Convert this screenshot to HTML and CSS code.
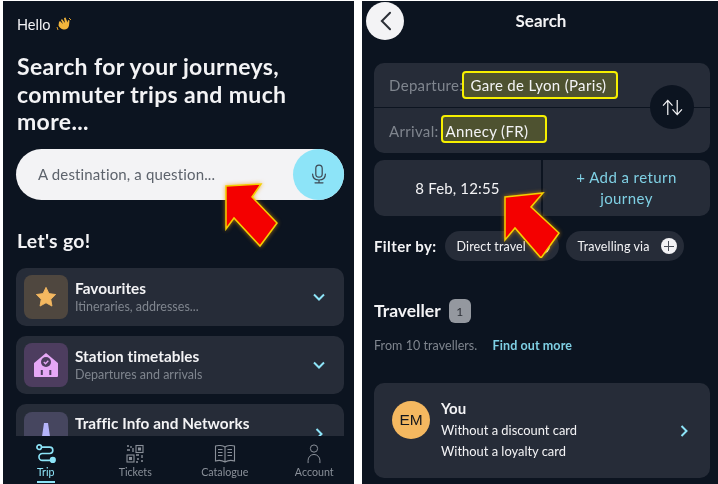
FILE: index.html
```html
<!DOCTYPE html>
<html lang="en">
<head>
<meta charset="utf-8">
<title>Journey search</title>
<link rel="stylesheet" href="styles.css">
</head>
<body>
<div class="shot">
  <section class="phone home">
    <div class="home-body">
      <p class="hello">Hello
        <svg class="wave" viewBox="0 0 16 16"><path d="M3 5l1-1 3 3-2-4 1-1 3 4-1-5 1.500-.5 2 5 .5-2.500 1.500.5-.5 5c-.5 3-3 4.500-5.500 4s-4-2-5-4z" fill="#f2b63c"/><path d="M1 10l1 3M13 1l2 2" stroke="#d99a2a" fill="none"/></svg>
      </p>
      <h1 class="headline">Search for your journeys, commuter trips and much more...</h1>
      <div class="searchbar">
        <span class="placeholder">A destination, a question...</span>
        <span class="mic">
          <svg viewBox="0 0 20 24" width="16" height="20" fill="none" stroke="#3d4752" stroke-width="1.500" stroke-linecap="round"><rect x="6" y="1" width="8" height="15" rx="4"/><path d="M2 12c0 5 3.500 7.500 8 7.500s8-2.500 8-7.500M10 20v3M5 23h10"/></svg>
        </span>
      </div>
      <h2 class="letsgo">Let's go!</h2>
      <div class="menu">
        <div class="item">
          <span class="tile tile-star"><svg viewBox="0 0 24 24" width="22" height="22"><path d="M12 1.500l3.200 6.800 7.300 1-5.300 5.200 1.300 7.400-6.500-3.600-6.500 3.600 1.300-7.400L1.500 9.300l7.300-1z" fill="#f4b860" stroke="#f4b860" stroke-linejoin="round"/></svg></span>
          <div class="item-text"><h3>Favourites</h3><p>Itineraries, addresses...</p></div>
          <svg class="chev" viewBox="0 0 12 8" width="12" height="8"><path d="M1 1.500l5 5 5-5" fill="none" stroke="#8de4f8" stroke-width="2"/></svg>
        </div>
        <div class="item">
          <span class="tile tile-station"><svg viewBox="0 0 24 24" width="24" height="24"><path d="M1 24a1 1 0 01-1-1V10.500a1 1 0 01.4-.8L12 0l11.600 9.700a1 1 0 01.4.8V23a1 1 0 01-1 1z" fill="#e6a8f6"/><rect x="6.800" y="17" width="2" height="5" fill="#4d3d5f"/><rect x="15.300" y="17" width="2" height="5" fill="#4d3d5f"/><circle cx="12" cy="9" r="5" fill="#4d3d5f"/><path d="M9.800 9l1.700 1.700 2.800-3" fill="none" stroke="#e6a8f6" stroke-width="1.300"/></svg></span>
          <div class="item-text"><h3>Station timetables</h3><p>Departures and arrivals</p></div>
          <svg class="chev" viewBox="0 0 12 8" width="12" height="8"><path d="M1 1.500l5 5 5-5" fill="none" stroke="#8de4f8" stroke-width="2"/></svg>
        </div>
        <div class="item item-last">
          <span class="tile tile-road"><svg viewBox="0 0 12 30" width="12" height="30"><path d="M4 1h4l4 27H7.500L7 18H5l-.5 10H0z" fill="#b5b4fa"/></svg></span>
          <div class="item-text"><h3>Traffic Info and Networks</h3></div>
          <svg class="chev chev-right" viewBox="0 0 8 12" width="8" height="12"><path d="M1.500 1l5 5-5 5" fill="none" stroke="#8de4f8" stroke-width="2"/></svg>
        </div>
      </div>
    </div>
    <nav class="tabs">
      <div class="tab tab-on">
        <svg viewBox="0 0 22 22" width="22" height="22" fill="none" stroke="#8de4f8" stroke-width="1.800"><circle cx="3.500" cy="3.500" r="2.500"/><path d="M6 3.500h9a3.500 3.500 0 010 7H7a3.700 3.700 0 000 7.500h9"/><circle cx="18.500" cy="17.500" r="2.500" fill="#8de4f8"/></svg>
        <span>Trip</span>
      </div>
      <div class="tab">
        <svg viewBox="0 0 20 20" width="20" height="20" fill="none" stroke="#8a9099" stroke-width="1.100"><rect x="11" y="1.500" width="7" height="7"/><rect x="2" y="11" width="7" height="7"/><rect x="13.500" y="4" width="2" height="2" fill="#8a9099"/><rect x="4.500" y="13.500" width="2" height="2" fill="#8a9099"/><path d="M2 2h2M6 2v2M2 6h3M8 4v4M11 11h3M17 11v3M12 15h2M11 18h2M16 17h2" stroke-width="1.300"/></svg>
        <span>Tickets</span>
      </div>
      <div class="tab">
        <svg viewBox="0 0 22 20" width="22" height="20" fill="none" stroke="#8a9099" stroke-width="1.100"><path d="M11 3C9 1.500 4 1 1.500 2v15c3-1 7-.5 9.500 1 2.500-1.500 6.500-2 9.500-1V2C18 1 13 1.500 11 3zM11 3v15"/><path d="M4 5.500h4.500M4 8.500h4.500M4 11.500h4.500M13.500 5.500H18M13.500 8.500H18M13.500 11.500H18"/></svg>
        <span>Catalogue</span>
      </div>
      <div class="tab">
        <svg viewBox="0 0 20 22" width="20" height="22" fill="none" stroke="#8a9099" stroke-width="1.100"><circle cx="10" cy="5" r="4"/><path d="M3.500 21v-3a6.500 6.500 0 0113 0v3"/></svg>
        <span>Account</span>
      </div>
    </nav>
  </section>

  <section class="phone search">
    <header class="topbar">
      <span class="back"><svg viewBox="0 0 14 22" width="13" height="20"><path d="M12 2L3 11l9 9" fill="none" stroke="#2b2f36" stroke-width="2.200" stroke-linecap="round"/></svg></span>
      <h2>Search</h2>
    </header>
    <div class="route">
      <div class="route-row"><span class="lbl">Departure:</span><span class="mark">Gare de Lyon (Paris)</span></div>
      <div class="route-row route-row2"><span class="lbl">Arrival:</span><span class="mark mark2">Annecy (FR)</span></div>
      <span class="swap"><svg viewBox="0 0 22 18" width="21" height="17" fill="none" stroke="#f3f3f5" stroke-width="1.300"><path d="M6 17V2M1 7l5-5.500L11 7M16 1v15M11 11l5 5.500 5-5.500"/></svg></span>
    </div>
    <div class="when">
      <div class="when-cell">8 Feb, 12:55</div>
      <div class="when-cell when-add">+ Add a return journey</div>
    </div>
    <div class="filters">
      <strong>Filter by:</strong>
      <span class="chip chip-direct">Direct travel <i class="plus"></i></span>
      <span class="chip chip-via">Travelling via <i class="plus"></i></span>
    </div>
    <div class="traveller-head"><h2>Traveller</h2><span class="count">1</span></div>
    <p class="from">From 10 travellers. <a>Find out more</a></p>
    <div class="person">
      <span class="avatar">EM</span>
      <div class="person-text">
        <h3>You</h3>
        <p>Without a discount card</p>
        <p>Without a loyalty card</p>
      </div>
      <svg class="chev-right" viewBox="0 0 8 12" width="8" height="12"><path d="M1.500 1l5 5-5 5" fill="none" stroke="#8de4f8" stroke-width="2"/></svg>
    </div>
  </section>

  <svg class="arrow arrow-a" viewBox="0 0 60 68" width="60" height="68"><path d="M3 5L38 3 29 16 54 42 37 65 11 37 3 48z" fill="#f40000" stroke="#f4d000" stroke-width="1.500"/></svg>
  <svg class="arrow arrow-b" viewBox="0 0 60 68" width="60" height="68"><path d="M3 7L41 3 29 17 57 43 39 68 13 38 3 50z" fill="#f40000" stroke="#f4d000" stroke-width="1.500"/></svg>
</div>
</body>
</html>
```

FILE: styles.css
```css
* { box-sizing: border-box; }
html, body { margin: 0; padding: 0; background: #fff; }
h1, h2, h3, p { margin: 0; }
body { font-family: Lato, "Noto Sans", sans-serif; color: #f3f3f5; }

.shot {
  position: relative;
  width: 718px;
  height: 484px;
  display: flex;
  padding: 1px 0 0 3px;
  gap: 8px;
  overflow: hidden;
}
.phone { background: #0c1420; height: 483px; overflow: hidden; filter: blur(.35px); }

/* left screen */
.home { width: 351px; display: flex; flex-direction: column; }
.home-body { flex: 1; min-height: 0; overflow: hidden; padding: 14px 10px 0 13px; }
.hello { padding-left: 1px; font-size: 14.500px; line-height: 20px; display: flex; align-items: center; gap: 5px; }
.wave { width: 16px; height: 16px; }
.headline { margin-top: 18px; padding-left: 1px; font-size: 23px; letter-spacing: .35px; line-height: 27.500px; font-weight: 700; width: 300px; }
.searchbar {
  margin-top: 13px;
  height: 51px;
  border-radius: 26px;
  background: #f3f3f5;
  display: flex;
  align-items: center;
  justify-content: space-between;
  padding-left: 22px;
}
.placeholder { font-size: 15px; letter-spacing: .15px; color: #5d636c; }
.mic { width: 51px; height: 51px; border-radius: 50%; background: #8de4f8; display: flex; align-items: center; justify-content: center; }
.letsgo { margin-top: 30px; padding-left: 1px; font-size: 19.400px; letter-spacing: .3px; line-height: 22px; font-weight: 700; }
.menu { margin-top: 16px; display: flex; flex-direction: column; gap: 10px; }
.item { height: 58px; border-radius: 10px; background: #262c38; display: flex; align-items: center; padding: 0 19px 0 8px; }
.item-last { align-items: flex-start; padding-top: 8px; }
.tile { flex: none; width: 44px; height: 44px; border-radius: 8px; display: flex; align-items: center; justify-content: center; }
.tile-star { background: #4f473f; }
.tile-station { background: #4d3d5f; }
.tile-road { background: #46465f; align-items: flex-start; padding-top: 10px; }
.item-text { flex: 1; padding-left: 7px; }
.item-text h3 { font-size: 15.300px; letter-spacing: .05px; line-height: 20px; font-weight: 700; }
.item-text p { font-size: 12.500px; line-height: 17px; color: #7f858e; }
.item-last .item-text { padding-top: 1px; }
.chev-right { margin-top: 16px; margin-right: 2px; }
.tabs { flex: none; height: 48px; margin-left: -2px; display: grid; grid-template-columns: repeat(4, 89.500px); background: #0c1420; }
.tab { display: flex; flex-direction: column; align-items: center; padding-top: 8px; font-size: 10.700px; color: #8a9099; position: relative; }
.tab svg { height: 20px; }
.tab span { margin-top: 1px; line-height: 14px; }
.tab-on { color: #8de4f8; }
.tab-on::after { content: ""; position: absolute; left: 36px; bottom: 1px; width: 18px; height: 2px; background: #8de4f8; }

/* right screen */
.search { width: 356px; padding: 0 8px 0 12px; }
.topbar { position: relative; height: 62px; }
.back { position: absolute; left: -8px; top: 1px; width: 38px; height: 38px; border-radius: 50%; background: #f3f3f5; display: flex; align-items: center; justify-content: center; }
.topbar h2 { padding: 10px 2px 0 0; text-align: center; font-size: 17px; line-height: 20px; font-weight: 700; }
.route { position: relative; height: 90px; border-radius: 10px; background: #262c38; }
.route-row { height: 45px; display: flex; align-items: center; padding: 0 0 1px 15px; border-bottom: 1px solid #0c1420; font-size: 15px; letter-spacing: .33px; }
.route-row2 { border: 0; padding-bottom: 0; }
.lbl { color: #7f858e; }
.mark { margin-left: -1px; height: 28px; display: flex; align-items: center; padding: 0 10px 0 6px; border: 2px solid #f6f000; border-radius: 4px; background: #4e5230; color: #f3f3f5; }
.mark2 { padding: 4px 17px 0 3px; margin: -4px 0 0 2px; }
.swap { position: absolute; right: 16px; top: 22px; width: 44px; height: 44px; border-radius: 50%; background: #0c1420; display: flex; align-items: center; justify-content: center; }
.when { margin-top: 7px; height: 56px; display: grid; grid-template-columns: 167px 1fr; gap: 2px; border-radius: 10px; overflow: hidden; }
.when-cell { background: #262c38; display: flex; align-items: center; justify-content: center; text-align: center; font-size: 15px; letter-spacing: .15px; line-height: 21px; }
.when-add { color: #7fd0e4; letter-spacing: .42px; padding: 0 30px; }
.filters { margin-top: 15px; display: flex; align-items: center; gap: 8px; font-size: 15px; letter-spacing: .4px; }
.filters strong { font-weight: 700; }
.chip { flex: none; height: 30px; padding-left: 12px; border-radius: 15px; background: #262c38; display: flex; align-items: center; gap: 8px; font-size: 12.500px; letter-spacing: .12px; }
.chip-direct { width: 114px; }
.chip-via { width: 118px; margin-left: -1px; gap: 11px; }
.plus { flex: none; position: relative; width: 16px; height: 16px; border-radius: 50%; background: #f3f3f5; }
.plus::before, .plus::after { content: ""; position: absolute; background: #4a4f58; left: 3px; top: 7.500px; width: 10px; height: 1px; }
.plus::after { left: 7.500px; top: 3px; width: 1px; height: 10px; }
.traveller-head { margin-top: 38px; display: flex; align-items: center; gap: 8px; }
.traveller-head h2 { font-size: 17.500px; line-height: 24px; font-weight: 700; }
.count { width: 22px; height: 24px; border-radius: 6px; background: #94989f; color: #2b2f36; font-size: 12px; display: flex; align-items: center; justify-content: center; }
.from { margin-top: 14px; font-size: 12.500px; letter-spacing: .05px; line-height: 18px; color: #7f858e; }
.from a { margin-left: 12px; color: #7fd0e4; font-weight: 700; letter-spacing: .1px; }
.person { margin-top: 28px; height: 95px; border-radius: 10px; background: #262c38; display: flex; align-items: center; padding: 0 22px 0 18px; }
.avatar { flex: none; width: 38px; height: 38px; border-radius: 50%; background: #f4b860; color: #14171d; font-family: "Liberation Sans", sans-serif; font-size: 15.500px; display: flex; align-items: center; justify-content: center; margin-top: -21px; }
.person-text { flex: 1; padding-left: 11px; }
.person-text h3 { margin: -2px 0 2px; font-size: 15px; line-height: 20px; font-weight: 700; }
.person-text p { font-size: 12.900px; line-height: 21px; }
.person .chev-right { margin: 0; }

/* annotation arrows over the screens */
.arrow { position: absolute; filter: drop-shadow(0 0 2px rgba(240,150,0,.7)); }
.arrow-a { left: 223px; top: 181px; }
.arrow-b { left: 502px; top: 190px; }
```
